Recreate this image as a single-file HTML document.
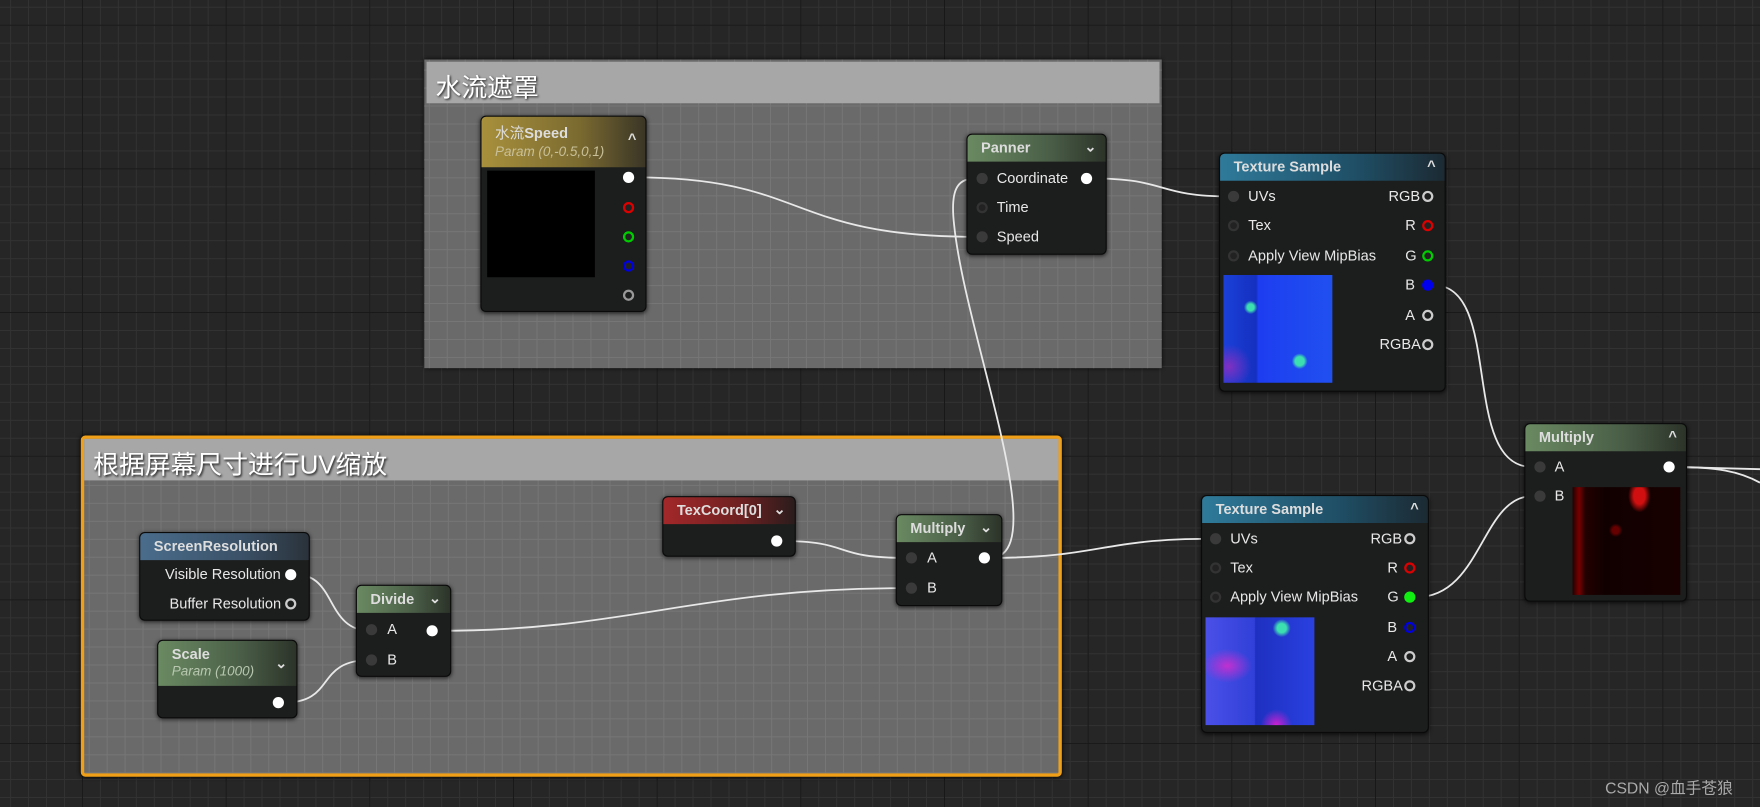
<!DOCTYPE html>
<html><head><meta charset="utf-8"><style>
*{margin:0;padding:0;box-sizing:border-box}
body{width:1760px;height:807px;overflow:hidden;background:#262626;font-family:"Liberation Sans","Noto Sans CJK SC",sans-serif}
#w{position:absolute;left:0;top:0;width:1568px;height:719px;transform:scale(1.12245);transform-origin:0 0;
background-color:#262626;
background-image:linear-gradient(90deg,#181818 1px,transparent 1px),linear-gradient(#181818 1px,transparent 1px),linear-gradient(90deg,#323232 1px,transparent 1px),linear-gradient(#323232 1px,transparent 1px);
background-size:128px 128px,128px 128px,16px 16px,16px 16px;background-position:73px 22px,73px 22px,9px 6px,9px 6px}
.cb{position:absolute;background-color:#6a6a6a;background-image:linear-gradient(90deg,#767676 1px,transparent 1px),linear-gradient(#767676 1px,transparent 1px);background-size:16px 16px;background-position:4px 9px;box-shadow:0 0 4px #000}
.ct{position:absolute;left:2px;right:2px;top:2px;height:37px;background:#a7a7a7;color:#fff;font-size:23px;padding:4px 8px;text-shadow:1px 1px 2px #222}
.n{position:absolute;background:#1c1e1d;border:1px solid #0a0a0a;border-radius:5px;box-shadow:0 1px 4px rgba(0,0,0,.7);color:#ddd;font-size:13px}
.h{height:24px;border-radius:4px 4px 0 0;padding:4px 12px;font-weight:bold;color:#ddd;font-size:13px;position:relative}
.h i{position:absolute;right:8px;top:3px;font-style:normal;font-weight:bold;font-size:13px}
.gr{background:linear-gradient(90deg,#6a8a62,#4a5e47 60%,#2c3329)}
.bl{background:linear-gradient(90deg,#2f7a9a,#1f4f66 60%,#1c2a33)}
.rd{background:linear-gradient(90deg,#a3282a,#6d2021 60%,#2a1c1c)}
.sb{background:linear-gradient(90deg,#4a6d8c,#3b5167 60%,#2a323a)}
.gd{background:linear-gradient(90deg,#a8903c,#7a6a30 60%,#3a3526)}
.t{position:absolute;font-size:13px;color:#e8e8e8;white-space:nowrap}
.p{position:absolute;width:10px;height:10px;border-radius:50%;border:2px solid #555;background:#222;transform:translate(-5px,-5px)}
.p.f{background:#3a3a3a;border-color:#3a3a3a}
.p.o{border-color:#ccc;background:#1c1e1d}
.p.w{background:#fff;border-color:#fff}
</style></head><body><div id="w">
<div class="cb" style="left:378px;top:53px;width:657px;height:275px"><div class="ct">水流遮罩</div></div>
<div class="cb" style="left:72px;top:388px;width:874px;height:304px;border:3px solid #f0a018;border-radius:4px"><div class="ct" style="left:0;right:0;top:0">根据屏幕尺寸进行UV缩放</div></div>

<svg width="1568" height="719" style="position:absolute;left:0;top:0" fill="none" stroke="#e8e8e8" stroke-width="1.6">
<path d="M565 158 C720 158 700 211 870 211"/>
<path d="M974 159 C1040 159 1030 175 1095 175"/>
<path d="M882 497 C940 497 860 300 850 200 C846 165 855 159 870 159"/>
<path d="M696 482 C760 482 740 497 806 497"/>
<path d="M882 497 C980 497 980 480 1080 480"/>
<path d="M1277 254 C1340 254 1300 416 1365 416"/>
<path d="M1262 532 C1320 532 1320 442 1365 442"/>
<path d="M1490 416 C1530 416 1550 420 1568 430"/>
<path d="M1490 416 L1568 418"/>
<path d="M264 512 C300 512 290 562 330 562"/>
<path d="M253 626 C300 626 280 588 330 588"/>
<path d="M390 562 C560 562 620 524 806 524"/>
</svg>

<div class="n" style="left:428px;top:103px;width:148px;height:175px">
<div class="h gd" style="height:45px;font-weight:normal">水流<b>Speed</b><br><span style="font-style:italic;color:#c8c09a;font-size:12px">Param (0,-0.5,0,1)</span><i style="top:12px">^</i></div>
<div style="position:absolute;left:5px;top:48px;width:96px;height:95px;background:#000"></div>
</div>
<div class="p w" style="left:560px;top:158px"></div><div class="p" style="left:560px;top:185px;border-color:#d00"></div><div class="p" style="left:560px;top:211px;border-color:#0c0"></div><div class="p" style="left:560px;top:237px;border-color:#00d"></div><div class="p o" style="left:560px;top:263px;border-color:#999"></div>

<div class="n" style="left:861px;top:119px;width:125px;height:108px"><div class="h gr">Panner<i>⌄</i></div></div>
<div class="p f" style="left:875px;top:159px"></div><div class="t" style="left:888px;top:151px">Coordinate</div><div class="p w" style="left:968px;top:159px"></div>
<div class="p" style="left:875px;top:185px;border-color:#333"></div><div class="t" style="left:888px;top:177px">Time</div>
<div class="p f" style="left:875px;top:211px"></div><div class="t" style="left:888px;top:203px">Speed</div>

<div class="n" style="left:1086px;top:136px;width:202px;height:213px"><div class="h bl">Texture Sample<i>^</i></div>
<div style="position:absolute;left:3px;top:108px;width:97px;height:96px;background:radial-gradient(circle at 25% 30%,#3ce0b0 3px,transparent 6px),radial-gradient(circle at 70% 80%,#3ce0b0 4px,transparent 7px),radial-gradient(circle at 5% 85%,#8030c0,transparent 20px),linear-gradient(90deg,#1a40d8,#1530c0 30%,#1d3df0 32%,#2050f0)"></div></div>
<div class="p f" style="left:1099px;top:175px"></div><div class="t" style="left:1112px;top:167px">UVs</div>
<div class="p" style="left:1099px;top:201px;border-color:#333"></div><div class="t" style="left:1112px;top:193px">Tex</div>
<div class="p" style="left:1099px;top:228px;border-color:#333"></div><div class="t" style="left:1112px;top:220px">Apply View MipBias</div>
<div class="t" style="left:1237px;top:167px">RGB</div><div class="p o" style="left:1272px;top:175px"></div>
<div class="t" style="left:1252px;top:193px">R</div><div class="p" style="left:1272px;top:201px;border-color:#d00"></div>
<div class="t" style="left:1252px;top:220px">G</div><div class="p" style="left:1272px;top:228px;border-color:#0c0"></div>
<div class="t" style="left:1252px;top:246px">B</div><div class="p" style="left:1272px;top:254px;border-color:#00e;background:#00e"></div>
<div class="t" style="left:1252px;top:273px">A</div><div class="p o" style="left:1272px;top:281px"></div>
<div class="t" style="left:1229px;top:299px">RGBA</div><div class="p o" style="left:1272px;top:307px"></div>

<div class="n" style="left:1358px;top:377px;width:145px;height:159px"><div class="h gr">Multiply<i>^</i></div>
<div style="position:absolute;left:42px;top:56px;width:96px;height:96px;background:radial-gradient(ellipse at 62% 8%,#d01010 5px,transparent 10px),radial-gradient(circle at 40% 40%,#600 3px,transparent 6px),linear-gradient(90deg,#200 0,#700 6%,#200 12%,#100 30%,#180000)"></div></div>
<div class="p f" style="left:1372px;top:416px"></div><div class="t" style="left:1385px;top:408px">A</div><div class="p w" style="left:1487px;top:416px"></div>
<div class="p f" style="left:1372px;top:442px"></div><div class="t" style="left:1385px;top:434px">B</div>

<div class="n" style="left:1070px;top:441px;width:203px;height:212px"><div class="h bl">Texture Sample<i>^</i></div>
<div style="position:absolute;left:3px;top:108px;width:97px;height:96px;background:radial-gradient(ellipse at 20% 45%,#c030d0,transparent 22px),radial-gradient(circle at 70% 10%,#3ce0b0 4px,transparent 8px),radial-gradient(circle at 65% 100%,#d020d0,transparent 14px),linear-gradient(90deg,#4a50e8,#3040d8 45%,#1d30c0 46%,#2a40e0)"></div></div>
<div class="p f" style="left:1083px;top:480px"></div><div class="t" style="left:1096px;top:472px">UVs</div>
<div class="p" style="left:1083px;top:506px;border-color:#333"></div><div class="t" style="left:1096px;top:498px">Tex</div>
<div class="p" style="left:1083px;top:532px;border-color:#333"></div><div class="t" style="left:1096px;top:524px">Apply View MipBias</div>
<div class="t" style="left:1221px;top:472px">RGB</div><div class="p o" style="left:1256px;top:480px"></div>
<div class="t" style="left:1236px;top:498px">R</div><div class="p" style="left:1256px;top:506px;border-color:#d00"></div>
<div class="t" style="left:1236px;top:524px">G</div><div class="p" style="left:1256px;top:532px;border-color:#1e1;background:#1e1"></div>
<div class="t" style="left:1236px;top:551px">B</div><div class="p" style="left:1256px;top:559px;border-color:#00d"></div>
<div class="t" style="left:1236px;top:577px">A</div><div class="p o" style="left:1256px;top:585px"></div>
<div class="t" style="left:1213px;top:603px">RGBA</div><div class="p o" style="left:1256px;top:611px"></div>

<div class="n" style="left:590px;top:442px;width:119px;height:54px"><div class="h rd">TexCoord[0]<i>⌄</i></div></div>
<div class="p w" style="left:692px;top:482px"></div>

<div class="n" style="left:798px;top:458px;width:95px;height:82px"><div class="h gr">Multiply<i>⌄</i></div></div>
<div class="p f" style="left:812px;top:497px"></div><div class="t" style="left:826px;top:489px">A</div><div class="p w" style="left:877px;top:497px"></div>
<div class="p f" style="left:812px;top:524px"></div><div class="t" style="left:826px;top:516px">B</div>

<div class="n" style="left:124px;top:474px;width:152px;height:79px"><div class="h sb">ScreenResolution</div></div>
<div class="t" style="left:147px;top:504px">Visible Resolution</div><div class="p w" style="left:259px;top:512px"></div>
<div class="t" style="left:151px;top:530px">Buffer Resolution</div><div class="p o" style="left:259px;top:538px"></div>

<div class="n" style="left:317px;top:521px;width:85px;height:82px"><div class="h gr">Divide<i>⌄</i></div></div>
<div class="p f" style="left:331px;top:561px"></div><div class="t" style="left:345px;top:553px">A</div><div class="p w" style="left:385px;top:562px"></div>
<div class="p f" style="left:331px;top:588px"></div><div class="t" style="left:345px;top:580px">B</div>

<div class="n" style="left:140px;top:570px;width:125px;height:70px"><div class="h gr" style="height:40px">Scale<br><span style="font-weight:normal;font-style:italic;color:#b8c8b0;font-size:12px">Param (1000)</span><i style="top:12px">⌄</i></div></div>
<div class="p w" style="left:248px;top:626px"></div>

<div style="position:absolute;left:1430px;top:692px;color:#aaa;font-size:14px">CSDN @血手苍狼</div>
</div></body></html>
